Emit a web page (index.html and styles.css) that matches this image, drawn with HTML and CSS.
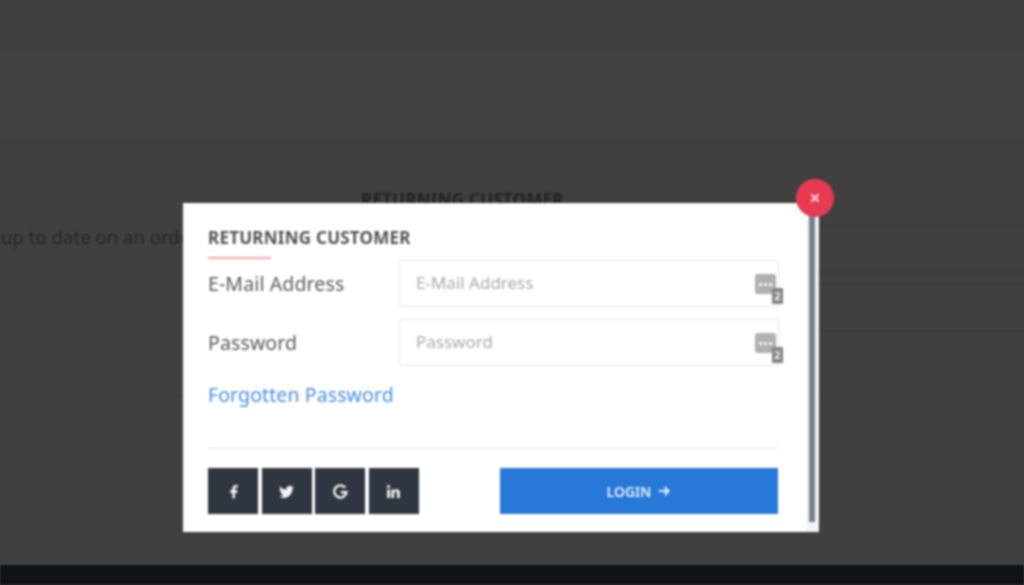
FILE: index.html
```html
<!DOCTYPE html>
<html lang="en">
<head>
<meta charset="utf-8">
<title>Login</title>
<link rel="stylesheet" href="styles.css">
</head>
<body>
<div class="stage">
  <div class="page">
    <div class="topbar"></div>
    <div class="band"></div>
    <div class="content">
      <div class="col-left"><p class="bg-text">up to date on an order</p></div>
      <div class="col-right">
        <h3 class="bg-title">RETURNING CUSTOMER</h3>
        <div class="bg-field"></div>
        <div class="bg-field second"></div>
      </div>
    </div>
    <div class="spacer"></div>
    <div class="footer"></div>
  </div>

  <div class="modal">
    <div class="modal-body">
      <h3 class="title">RETURNING CUSTOMER</h3>
      <div class="rule"></div>
      <div class="form-row">
        <label class="label">E-Mail Address</label>
        <div class="field">
          <span class="placeholder">E-Mail Address</span>
          <span class="pw-icon"><span class="dots"><i></i><i></i><i></i></span><b class="badge">2</b></span>
        </div>
      </div>
      <div class="form-row">
        <label class="label">Password</label>
        <div class="field">
          <span class="placeholder">Password</span>
          <span class="pw-icon"><span class="dots"><i></i><i></i><i></i></span><b class="badge">2</b></span>
        </div>
      </div>
      <a class="forgot">Forgotten Password</a>
      <div class="divider"></div>
      <div class="actions">
        <div class="socials">
          <a class="social"><svg viewBox="0 0 24 24"><path d="M14 22v-8h3l.5-4H14V8c0-1 .4-1.7 1.8-1.7H18V3c-.5-.1-1.7-.2-2.9-.2C12.5 2.8 10.5 4.4 10.5 7.5V10h-3v4h3v8z"/></svg></a>
          <a class="social"><svg viewBox="0 0 24 24"><path d="M22.46 6c-.77.35-1.6.58-2.46.69.88-.53 1.56-1.37 1.88-2.38-.83.5-1.75.85-2.72 1.05C18.37 4.5 17.26 4 16 4c-2.35 0-4.27 1.92-4.27 4.29 0 .34.04.67.11.98C8.28 9.09 5.11 7.38 3 4.79c-.37.63-.58 1.37-.58 2.15 0 1.49.75 2.81 1.91 3.56-.71 0-1.37-.2-1.95-.5v.03c0 2.08 1.48 3.82 3.44 4.21a4.22 4.22 0 0 1-1.93.07 4.28 4.28 0 0 0 4 2.98 8.52 8.52 0 0 1-5.33 1.84c-.34 0-.68-.02-1.02-.06C3.44 20.29 5.7 21 8.12 21 16 21 20.33 14.46 20.33 8.79c0-.19 0-.37-.01-.56.84-.6 1.56-1.36 2.14-2.23z"/></svg></a>
          <a class="social"><svg viewBox="0 0 24 24"><path class="g-stroke" d="M18.6 6.6A8.6 8.6 0 1 0 20.4 13H12.5"/></svg></a>
          <a class="social"><svg viewBox="0 0 24 24"><circle cx="5" cy="5" r="2.3"/><path d="M3 9h4v12H3zM21 21h-4v-6.5c0-1.5-.6-2.5-1.9-2.5-1.4 0-2.1 1-2.1 2.5V21H9V9h4v1.7c.6-1 1.8-2 3.6-2 3 0 4.4 1.9 4.4 5V21z"/></svg></a>
        </div>
        <button class="login">LOGIN <svg class="arrow" viewBox="0 0 24 24"><path d="M3 12h17M13 5l7 7-7 7"/></svg></button>
      </div>
    </div>
    <div class="scrollbar"><div class="thumb"></div></div>
    <button class="close"><svg viewBox="0 0 10 10"><path d="M1.5 1.5l7 7M8.5 1.5l-7 7"/></svg></button>
  </div>
</div>
</body>
</html>
```
FILE: styles.css
```css
* { box-sizing: border-box; }
html, body { margin: 0; height: 100%; overflow: hidden; background: #404040; }
body { font-family: "Noto Sans", "Open Sans", sans-serif; }

.stage { position: relative; width: 1024px; height: 585px; overflow: hidden; filter: blur(0.8px); }

/* dimmed page behind the dialog */
.page { display: flex; flex-direction: column; height: 585px; background: #404040; }
.topbar { height: 50px; background: #3f3f3f; }
.band { height: 91px; border-bottom: 1px solid #3a3a3a; background: #414141; }
.content { display: flex; height: 256px; border-bottom: 1px solid #3b3b3b; }
.col-left { width: 361px; }
.bg-text { margin: 84px 0 0; padding-left: 1px; font-size: 18.6px; line-height: 24px; color: #262626; white-space: nowrap; }
.col-right { flex: 1; padding-top: 49px; }
.bg-title { margin: 0; font-size: 17px; line-height: 20px; letter-spacing: .25px; font-weight: 700; color: #222; white-space: nowrap; }
.bg-field { height: 48px; margin-top: 15px; border-top: 1px solid #3a3a3a; border-bottom: 1px solid #3a3a3a; }
.bg-field.second { margin-top: 10px; }
.spacer { flex: 1; }
.footer { height: 20px; background: #0f1316; }

/* dialog */
.modal { position: absolute; left: 183px; top: 203px; width: 636px; height: 329px; display: flex; background: #fff; }
.modal-body { width: 623px; padding: 25px 0 0 25px; flex: none; }
.scrollbar { width: 13px; background: #f5f5f5; padding: 12px 4px 10px 2.5px; }
.thumb { height: 100%; background: #77818a; }

.title { margin: 0; height: 20px; font-size: 17px; line-height: 20px; letter-spacing: .25px; font-weight: 700; color: #50545a; white-space: nowrap; }
.rule { width: 63px; height: 2px; margin-top: 9px; margin-bottom: 1px; background: #f6a5ad; }
.form-row { display: flex; align-items: center; height: 47px; margin-bottom: 12px; }
.label { width: 191px; font-size: 19.5px; letter-spacing: .12px; color: #5a5a5a; white-space: nowrap; }
.field { position: relative; display: flex; align-items: center; width: 380px; height: 47px; padding: 0 0 2px 16px; border: 1px solid #e8e8e8; border-radius: 2px; }
.placeholder { font-size: 17px; color: #ababab; }
.pw-icon { position: absolute; left: 355px; top: 13px; width: 30px; height: 32px; }
.dots { display: flex; align-items: center; justify-content: center; gap: 2px; width: 21px; height: 20px; background: #b0b0b0; border-radius: 3px; }
.dots i { width: 3px; height: 3px; background: #f2f2f2; }
.badge { position: absolute; left: 17px; top: 14px; width: 11px; height: 16px; background: #858585; color: #eee; font-size: 11px; line-height: 16px; text-align: center; font-weight: 700; }

.forgot { display: block; margin-top: 15px; height: 28px; font-size: 19.5px; line-height: 28px; letter-spacing: .1px; color: #4a90e2; white-space: nowrap; }
.divider { width: 570px; height: 1px; margin-top: 39px; background: #e4e4e4; }
.actions { display: flex; justify-content: space-between; width: 570px; margin-top: 19px; }
.socials { display: flex; gap: 3.4px; }
.social { display: flex; align-items: center; justify-content: center; width: 50.2px; height: 46px; background: #2f3640; }
.social svg { width: 17px; height: 17px; fill: #f4f4f4; }
.social .g-stroke { fill: none; stroke: #f4f4f4; stroke-width: 3.4; }
.login { display: flex; align-items: center; justify-content: center; gap: 6px; width: 278px; height: 46px; padding: 0; border: 0; background: #2878d8; color: #e8f1fb; font: 600 14px "Noto Sans", sans-serif; }
.arrow { width: 14px; height: 14px; fill: none; stroke: #e8f1fb; stroke-width: 3.2; }

.close { position: absolute; left: 613px; top: -24px; display: flex; align-items: center; justify-content: center; width: 38px; height: 38px; padding: 0; border: 0; border-radius: 50%; background: #e83a52; }
.close svg { width: 10px; height: 10px; fill: none; stroke: #fbe3e6; stroke-width: 1.8; }
```
